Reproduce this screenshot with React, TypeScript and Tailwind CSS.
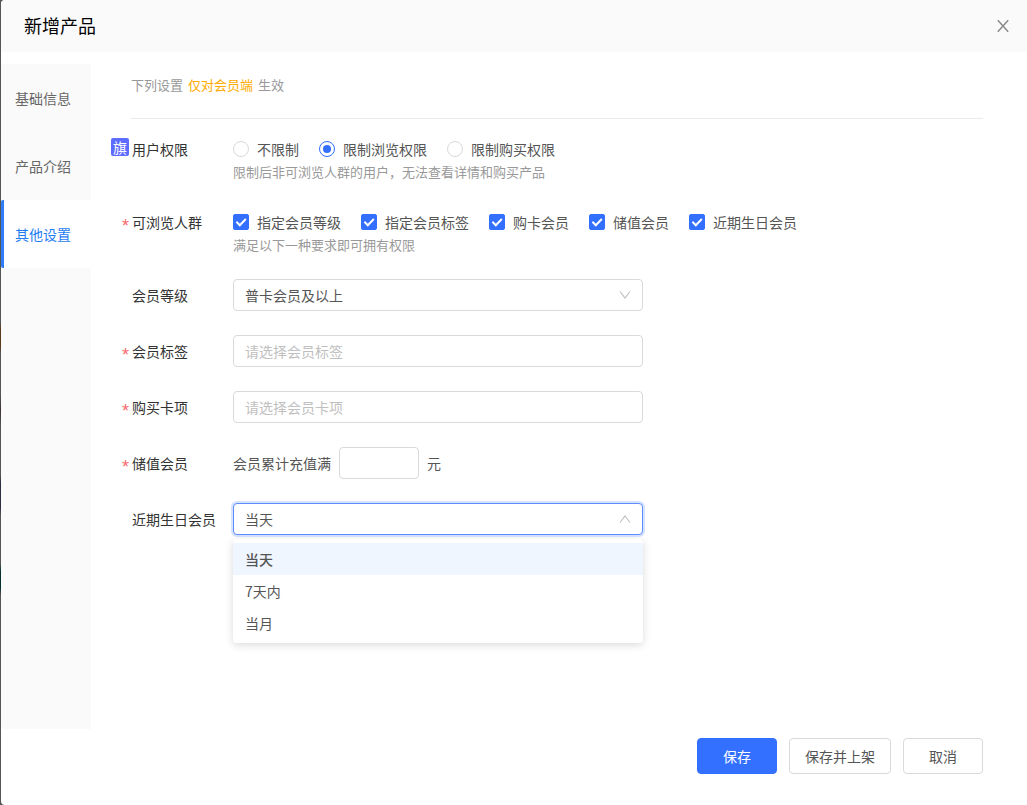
import React, { useState } from 'react';

const tabs = ['基础信息', '产品介绍', '其他设置'];
const permissions = ['不限制', '限制浏览权限', '限制购买权限'];
const groups = ['指定会员等级', '指定会员标签', '购卡会员', '储值会员', '近期生日会员'];
const birthdayOptions = ['当天', '7天内', '当月'];

interface RowProps {
  label: string;
  htmlFor?: string;
  required?: boolean;
  flag?: boolean;
  tall?: boolean;
  className?: string;
  children: React.ReactNode;
}

function Row({ label, htmlFor, required, flag, tall, className = 'mb-6', children }: RowProps) {
  const labelClass = 'text-[#333]';
  return (
    <div className={`flex ${className}`}>
      <div className={`flex w-[122px] shrink-0 ${tall ? 'h-8 leading-8' : 'h-[22px] leading-[22px]'}`}>
        <span className="flex w-[21px] shrink-0 justify-end pr-[3px]">
          {required && <span className="pt-1 font-['Liberation_Sans',sans-serif] text-lg leading-[inherit] text-[#f56c6c]">*</span>}
          {flag && (
            <span className="h-[18px] w-[18px] rounded-xs bg-[#5e6bff] text-center text-sm leading-[18px] text-white">
              旗
            </span>
          )}
        </span>
        {htmlFor ? (
          <label htmlFor={htmlFor} className={labelClass}>{label}</label>
        ) : (
          <span className={labelClass}>{label}</span>
        )}
      </div>
      <div className="min-w-0 flex-1">{children}</div>
    </div>
  );
}

function Chevron({ up = false }: { up?: boolean }) {
  return (
    <svg
      viewBox="0 0 12 12"
      className="pointer-events-none col-start-1 row-start-1 mr-3 h-3 w-3 self-center justify-self-end"
      fill="none"
      stroke="#bfbfbf"
      strokeWidth="1.1"
    >
      <path d={up ? 'M1 9.5 6 3l5 6.5' : 'M1 2.5 6 9l5-6.5'} />
    </svg>
  );
}

function Checkbox({ label }: { label: string }) {
  const [checked, setChecked] = useState(true);

  return (
    <label className="flex items-center gap-2">
      <span className="grid h-4 w-4">
        <input
          type="checkbox"
          checked={checked}
          onChange={() => setChecked(!checked)}
          className="col-start-1 row-start-1 h-4 w-4 appearance-none rounded-xs border border-[#d9d9d9] checked:border-[#3370ff] checked:bg-[#3370ff]"
        />
        <svg viewBox="0 0 16 16" className="pointer-events-none col-start-1 row-start-1 h-4 w-4" fill="none" stroke="#fff" strokeWidth="2">
          <path d="M3.4 7.8 6.8 11.2 12.8 5" />
        </svg>
      </span>
      {label}
    </label>
  );
}

export default function App() {
  const [activeTab, setActiveTab] = useState('其他设置');
  const [permission, setPermission] = useState('限制浏览权限');
  const [birthday, setBirthday] = useState('当天');

  const fieldClass =
    'h-8 w-full max-w-[410px] rounded border border-[#d9d9d9] bg-white px-[11px] text-[#555] outline-none placeholder:text-[#bfbfbf]';
  const buttonClass = 'h-9 min-w-20 rounded border px-[15px]';

  return (
    <div className="min-h-screen bg-[linear-gradient(#555_40%,#5c3a18_41%,#5c3a18_43%,#555_44%,#555_49%,#3a3230_51%,#555_53%,#555_59%,#2b2d40_60%,#2b2d40_63%,#555_64%,#555_70%,#06302e_71%,#06302e_73%,#555_74%)] pl-px font-['Noto_Sans_CJK_SC',sans-serif] text-sm leading-[22px] text-[#555]">
      <div className="flex min-h-screen flex-col overflow-hidden rounded-l bg-white">
        <header className="flex h-[52px] shrink-0 items-center justify-between bg-[#fafafa] pr-[18px] pl-[23px]">
          <h1 className="pb-0.5 text-lg text-black">新增产品</h1>
          <button aria-label="关闭" className="h-3 w-3">
            <svg viewBox="0 0 12 12" className="h-3 w-3" fill="none" stroke="#888" strokeWidth="1.5">
              <path d="M.8.3 11.2 11.7M11.2.3.8 11.7" />
            </svg>
          </button>
        </header>

        <div className="flex flex-1 pt-3">
          <nav className="flex w-[90px] shrink-0 flex-col rounded-bl bg-[#fafafa]">
            {tabs.map(tab => (
              <button
                key={tab}
                onClick={() => setActiveTab(tab)}
                className={`h-[68px] border-l-3 pr-[9px] ${
                  tab === activeTab ? 'rounded-l-xs border-[#2f7df6] bg-white text-[#1f7cf2]' : 'border-transparent text-[#666]'
                }`}
              >
                {tab}
              </button>
            ))}
          </nav>

          <main className="min-w-0 flex-1 pr-11 pl-5">
            <p className="mb-[19px] ml-5 border-b border-[#ebebeb] pt-[11px] pb-[23px] text-[13px] leading-5 text-[#999]">
              下列设置<span className="mx-[5px] text-[#ffaa00]">仅对会员端</span>生效
            </p>

            <Row label="用户权限" flag className="mb-[27px]">
              <div className="flex flex-wrap gap-x-5">
                {permissions.map(item => (
                  <label key={item} className="flex items-center gap-2">
                    <input
                      type="radio"
                      name="permission"
                      checked={permission === item}
                      onChange={() => setPermission(item)}
                      className="grid h-4 w-4 appearance-none place-items-center rounded-full border border-[#d9d9d9] before:h-2 before:w-2 before:rounded-full checked:border-[#3370ff] checked:before:bg-[#3370ff]"
                    />
                    {item}
                  </label>
                ))}
              </div>
              <p className="text-[13px] leading-6 text-[#999]">限制后非可浏览人群的用户，无法查看详情和购买产品</p>
            </Row>

            <Row label="可浏览人群" required className="mb-[22px]">
              <div className="flex flex-wrap gap-x-5">
                {groups.map(item => <Checkbox key={item} label={item} />)}
              </div>
              <p className="text-[13px] leading-6 text-[#999]">满足以下一种要求即可拥有权限</p>
            </Row>

            <Row label="会员等级" htmlFor="level" tall>
              <div className="grid max-w-[410px]">
                <select id="level" className={`${fieldClass} col-start-1 row-start-1 appearance-none`}>
                  <option>普卡会员及以上</option>
                </select>
                <Chevron />
              </div>
            </Row>

            <Row label="会员标签" htmlFor="tag" required tall>
              <input id="tag" placeholder="请选择会员标签" className={`${fieldClass} block`} />
            </Row>

            <Row label="购买卡项" htmlFor="card" required tall>
              <input id="card" placeholder="请选择会员卡项" className={`${fieldClass} block`} />
            </Row>

            <Row label="储值会员" htmlFor="amount" required tall>
              <div className="flex items-center gap-2">
                <span>会员累计充值满</span>
                <input id="amount" className="h-8 w-20 rounded border border-[#d9d9d9] px-[11px] outline-none" />
                <span>元</span>
              </div>
            </Row>

            <Row label="近期生日会员" htmlFor="birthday" tall>
              <div className="relative grid max-w-[410px]">
                <select
                  id="birthday"
                  value={birthday}
                  onChange={e => setBirthday(e.target.value)}
                  className="col-start-1 row-start-1 h-8 w-full appearance-none rounded border border-[#5a8eff] bg-white px-[11px] text-[#555] shadow-[0_0_0_2px_rgba(51,112,255,0.2)] outline-none"
                >
                  {birthdayOptions.map(item => <option key={item}>{item}</option>)}
                </select>
                <Chevron up />
                <ul
                  role="listbox"
                  className="absolute top-full right-0 left-0 mt-1 rounded bg-white py-1 shadow-[0_2px_8px_rgba(0,0,0,0.15)]"
                >
                  {birthdayOptions.map(item => (
                    <li
                      key={item}
                      role="option"
                      aria-selected={item === birthday}
                      onClick={() => setBirthday(item)}
                      className={`h-8 cursor-pointer px-3 leading-8 ${item === birthday ? 'bg-[#f0f6ff] font-medium' : ''}`}
                    >
                      {item}
                    </li>
                  ))}
                </ul>
              </div>
            </Row>
          </main>
        </div>

        <footer className="flex shrink-0 justify-end gap-3 pt-[9px] pr-11 pb-[31px]">
          <button className={`${buttonClass} border-[#3370ff] bg-[#3370ff] text-white`}>保存</button>
          <button className={`${buttonClass} border-[#d9d9d9] bg-white`}>保存并上架</button>
          <button className={`${buttonClass} border-[#d9d9d9] bg-white`}>取消</button>
        </footer>
      </div>
    </div>
  );
}
